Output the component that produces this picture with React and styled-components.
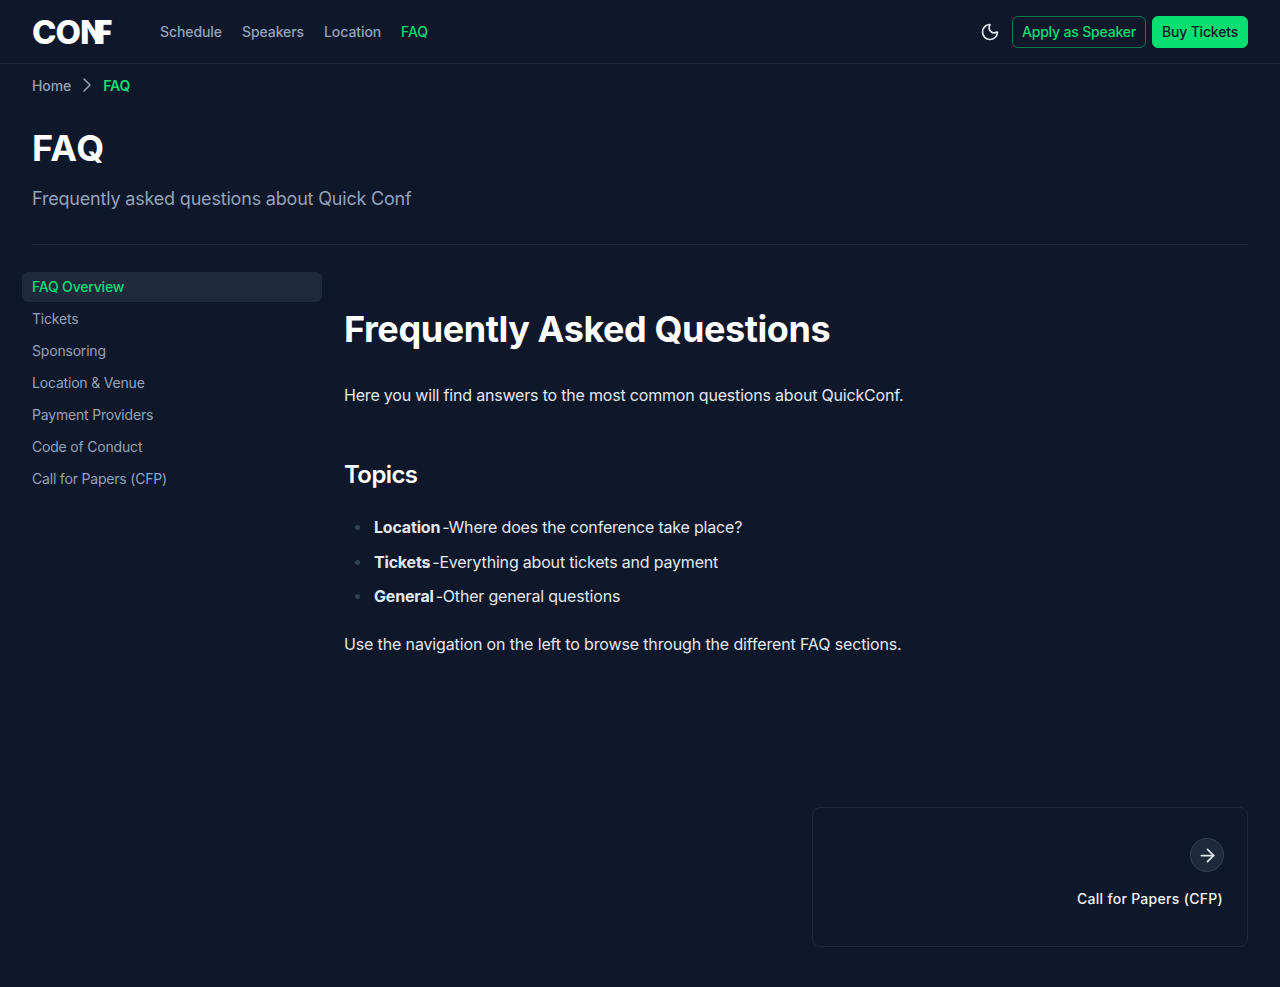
import React from 'react';
import styled, { createGlobalStyle } from 'styled-components';
import { ArrowRight, ChevronRight, Moon } from 'lucide-react';

const GlobalStyle = createGlobalStyle`
  html, body {
    margin: 0;
    background: #0f172a;
  }
  body {
    font-family: Inter, "Noto Sans", sans-serif;
    color: #e2e8f0;
  }
  * {
    box-sizing: border-box;
  }
`;

const Page = styled.div`
  min-height: 987px;
  background: #0f172a;
`;

const Header = styled.header`
  display: flex;
  align-items: center;
  height: 64px;
  padding: 0 32px;
  border-bottom: 1px solid #1e293b;
`;

const Logo = styled.a`
  width: 80px;
  margin-right: 48px;
  font-size: 33px;
  font-weight: 800;
  line-height: 32px;
  letter-spacing: -1px;
  color: #fff;
  white-space: nowrap;
`;

const LogoF = styled.span`
  margin-left: -11px;
`;

const Nav = styled.nav`
  display: flex;
  gap: 20px;
`;

const NavLink = styled.a`
  font-size: 14px;
  font-weight: 500;
  letter-spacing: -0.08px;
  color: ${(p) => (p.$active ? '#05df72' : '#94a3b8')};
`;

const Actions = styled.div`
  display: flex;
  align-items: center;
  gap: 6px;
  margin-left: auto;
`;

const ThemeButton = styled.button`
  display: flex;
  margin-right: 6px;
  padding: 0;
  background: none;
  border: 0;
  color: #e2e8f0;
`;

const Button = styled.a`
  display: flex;
  align-items: center;
  justify-content: center;
  width: ${(p) => (p.$solid ? '96px' : '134px')};
  height: 32px;
  border-radius: 6px;
  border: 1px solid ${(p) => (p.$solid ? '#05df72' : '#0b7a4f')};
  background: ${(p) => (p.$solid ? '#05df72' : 'transparent')};
  color: ${(p) => (p.$solid ? '#0f172a' : '#05df72')};
  font-size: 14px;
  font-weight: 500;
  letter-spacing: -0.18px;
`;

const Crumbs = styled.div`
  display: flex;
  align-items: center;
  gap: 4px;
  height: 42px;
  padding: 0 32px;
  font-size: 14px;
  font-weight: 500;
  letter-spacing: -0.1px;
  color: #94a3b8;
`;

const CrumbCurrent = styled.span`
  color: #05df72;
  font-weight: 600;
`;

const PageHead = styled.div`
  margin: 0 32px;
  padding: 22px 0 31px;
  border-bottom: 1px solid #1e293b;
`;

const PageTitle = styled.h1`
  margin: 0 0 17px;
  font-size: 36px;
  font-weight: 700;
  line-height: 40px;
  letter-spacing: 0.5px;
  color: #fff;
`;

const PageLead = styled.p`
  margin: 0;
  font-size: 18px;
  line-height: 28px;
  letter-spacing: -0.19px;
  color: #94a3b8;
`;

const Body = styled.div`
  display: flex;
  gap: 22px;
  padding: 27px 32px 0 22px;
`;

const Sidebar = styled.aside`
  display: flex;
  flex-direction: column;
  gap: 2px;
  width: 300px;
  flex-shrink: 0;
`;

const SideLink = styled.a`
  display: flex;
  align-items: center;
  height: 30px;
  padding: 0 10px 2px;
  border-radius: 6px;
  font-size: 14px;
  font-weight: ${(p) => (p.$active ? 500 : 400)};
  letter-spacing: -0.19px;
  background: ${(p) => (p.$active ? '#1e293b' : 'transparent')};
  color: ${(p) => (p.$active ? '#05df72' : '#94a3b8')};
`;

const Article = styled.main`
  flex: 1;
  padding-top: 34px;
`;

const Heading = styled.h2`
  margin: 0 0 31px;
  font-size: 36px;
  font-weight: 700;
  line-height: 46px;
  letter-spacing: -0.42px;
  color: #fff;
`;

const Text = styled.p`
  margin: 0;
  font-size: 16px;
  line-height: 24px;
  letter-spacing: ${(p) => p.$spacing || '-0.19px'};
`;

const SubHeading = styled.h3`
  margin: 52px 0 24px;
  font-size: 24px;
  font-weight: 600;
  line-height: 32px;
  letter-spacing: -0.6px;
  color: #fff;
`;

const List = styled.ul`
  margin: 0 0 24px;
  padding: 0 0 0 30px;
  list-style: none;
  font-size: 16px;
  line-height: 24px;
  letter-spacing: -0.19px;
`;

const Item = styled.li`
  position: relative;
  margin-bottom: 10.5px;
  &::before {
    content: '';
    position: absolute;
    left: -19.5px;
    top: 10px;
    width: 5px;
    height: 5px;
    border-radius: 50%;
    background: #334155;
  }
`;

const Strong = styled.strong`
  font-weight: 700;
`;

const Dash = styled.span`
  margin: 0 0 0 2px;
`;

const Footer = styled.div`
  display: flex;
  justify-content: flex-end;
  margin-top: 151px;
  padding-right: 32px;
`;

const NextCard = styled.a`
  display: flex;
  flex-direction: column;
  align-items: flex-end;
  gap: 17px;
  width: 436px;
  height: 140px;
  padding: 30px 24px 0;
  border: 1px solid #1e293b;
  border-radius: 8px;
`;

const ArrowCircle = styled.span`
  display: flex;
  align-items: center;
  justify-content: center;
  width: 34px;
  height: 34px;
  margin-right: -1px;
  border-radius: 50%;
  border: 1px solid #334155;
  background: #1e293b;
  color: #e2e8f0;
`;

const CardLabel = styled.span`
  font-size: 14px;
  font-weight: 500;
  line-height: 20px;
  letter-spacing: 0.3px;
  color: #f1f5f9;
`;

const navLinks = ['Schedule', 'Speakers', 'Location', 'FAQ'];
const sideLinks = ['FAQ Overview', 'Tickets', 'Sponsoring', 'Location & Venue', 'Payment Providers', 'Code of Conduct', 'Call for Papers (CFP)'];
const topics = [
  ['Location', 'Where does the conference take place?'],
  ['Tickets', 'Everything about tickets and payment'],
  ['General', 'Other general questions'],
];

export default function App() {
  return (
    <Page>
      <GlobalStyle />
      <Header>
        <Logo>CON<LogoF>F</LogoF></Logo>
        <Nav>
          {navLinks.map((link) => (
            <NavLink key={link} $active={link === 'FAQ'}>{link}</NavLink>
          ))}
        </Nav>
        <Actions>
          <ThemeButton aria-label="Toggle theme"><Moon size={20} /></ThemeButton>
          <Button>Apply as Speaker</Button>
          <Button $solid>Buy Tickets</Button>
        </Actions>
      </Header>
      <Crumbs>
        <span>Home</span>
        <ChevronRight size={24} strokeWidth={1.5} />
        <CrumbCurrent>FAQ</CrumbCurrent>
      </Crumbs>
      <PageHead>
        <PageTitle>FAQ</PageTitle>
        <PageLead>Frequently asked questions about Quick Conf</PageLead>
      </PageHead>
      <Body>
        <Sidebar>
          {sideLinks.map((link, i) => (
            <SideLink key={link} $active={i === 0}>{link}</SideLink>
          ))}
        </Sidebar>
        <Article>
          <Heading>Frequently Asked Questions</Heading>
          <Text>Here you will find answers to the most common questions about QuickConf.</Text>
          <SubHeading>Topics</SubHeading>
          <List>
            {topics.map(([name, desc]) => (
              <Item key={name}><Strong>{name}</Strong><Dash>-</Dash>{desc}</Item>
            ))}
          </List>
          <Text $spacing="-0.14px">Use the navigation on the left to browse through the different FAQ sections.</Text>
        </Article>
      </Body>
      <Footer>
        <NextCard>
          <ArrowCircle><ArrowRight size={21} /></ArrowCircle>
          <CardLabel>Call for Papers (CFP)</CardLabel>
        </NextCard>
      </Footer>
    </Page>
  );
}
